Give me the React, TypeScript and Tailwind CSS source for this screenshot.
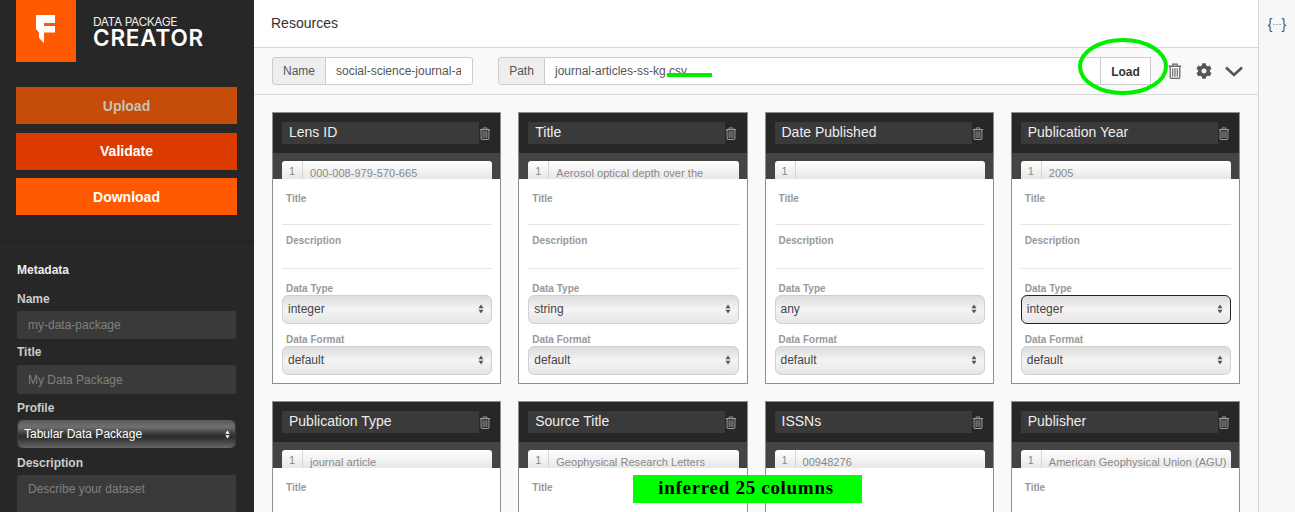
import React from 'react';
import { FaCog } from 'react-icons/fa';

const columns = [
  { name: 'Lens ID', sample: '000-008-979-570-665', type: 'integer' },
  { name: 'Title', sample: 'Aerosol optical depth over the', type: 'string' },
  { name: 'Date Published', sample: '', type: 'any' },
  { name: 'Publication Year', sample: '2005', type: 'integer', focused: true },
  { name: 'Publication Type', sample: 'journal article', type: 'string' },
  { name: 'Source Title', sample: 'Geophysical Research Letters', type: 'string' },
  { name: 'ISSNs', sample: '00948276', type: 'string' },
  { name: 'Publisher', sample: 'American Geophysical Union (AGU)', type: 'string' },
];

function Trash({ className }: { className?: string }) {
  return (
    <svg viewBox="0 0 12 14" className={className} fill="none" stroke="currentColor">
      <path d="M0.5 2.8H11.5" strokeWidth="1.3" />
      <path d="M4 2.5V1H8V2.5" strokeWidth="1" />
      <path d="M1.8 3V12.2C1.8 12.9 2.2 13.4 2.8 13.4H9.2C9.8 13.4 10.2 12.9 10.2 12.2V3" strokeWidth="1.1" />
      <path d="M4 4.5V12M6 4.5V12M8 4.5V12" strokeWidth="1" />
    </svg>
  );
}

function UpDown({ className }: { className?: string }) {
  return (
    <svg viewBox="0 0 7 12" className={className} fill="currentColor">
      <path d="M3.5 0.5L6.5 5H0.5Z" />
      <path d="M3.5 11.5L0.5 7H6.5Z" />
    </svg>
  );
}

function FieldSelect({ value, focused }: { value: string; focused?: boolean }) {
  return (
    <div
      className={`flex h-[29px] items-center justify-between rounded-[6px] bg-gradient-to-b from-[#dcdcdc] via-[#f4f4f4] to-[#e6e6e6] pb-[1px] pl-[5px] pr-[7px] text-[12px] font-normal text-[#444] ${
        focused ? 'border border-[#222]' : 'border border-[#d0d0d0]'
      }`}
    >
      <span>{value}</span>
      <UpDown className="h-[10px] w-[6px] text-[#555]" />
    </div>
  );
}

function ColumnCard({ name, sample, type, focused }: { name: string; sample: string; type: string; focused?: boolean }) {
  return (
    <div className="h-[272px] overflow-hidden border border-[#8f8f8f] bg-white">
      <div className="flex h-[40px] items-center bg-[#272727] pl-[9px] pr-[7px]">
        <div className="flex h-[22px] w-[197px] items-center bg-[#3a3a3a] pb-[1px] pl-[7px] text-[14px] text-[#eee]">{name}</div>
        <Trash className="h-[13px] w-[12px] text-[#999]" />
      </div>
      <div className="h-[26px] overflow-hidden bg-[#444] pl-[9px] pr-[8px] pt-[8px]">
        <div className="flex h-[30px] rounded-[3px] bg-gradient-to-b from-white to-[#d8d8d8] text-[11px] tracking-[0.05px] text-[#888]">
          <span className="w-[21px] border-r border-[#d4d4d4] pl-[7px] pt-[2px]">1</span>
          <span className="whitespace-nowrap pl-[7px] pt-[4px]">{sample}</span>
        </div>
      </div>
      <div className="pl-[9px] pr-[8px] pt-[12px] text-[10px] font-bold text-[#999]">
        <div className="h-[34px] border-b border-[#e4e4e4] pl-[4px]">Title</div>
        <div className="mt-[8px] h-[36px] border-b border-[#e4e4e4] pl-[4px]">Description</div>
        <div className="mt-[12px] h-[14px] pl-[4px]">Data Type</div>
        <FieldSelect value={type} focused={focused} />
        <div className="mt-[8px] h-[14px] pl-[4px]">Data Format</div>
        <FieldSelect value="default" />
      </div>
    </div>
  );
}

function SideButton({ label, className }: { label: string; className: string }) {
  return <div className={`flex h-[37px] items-center justify-center text-[14px] font-bold ${className}`}>{label}</div>;
}

function SideInput({ text, className }: { text: string; className: string }) {
  return <div className={`rounded-[2px] bg-[#3a3a3a] pl-[11px] text-[12px] text-[#808080] ${className}`}>{text}</div>;
}

export default function App() {
  return (
    <div
      className="relative flex h-[512px] w-[1295px] overflow-hidden bg-white text-[#333]"
      style={{ fontFamily: '"Liberation Sans", Arial, sans-serif' }}
    >
      {/* sidebar */}
      <aside className="h-full w-[254px] shrink-0 bg-[#272727]">
        <div className="flex h-[62px] pl-[16px]">
          <div className="flex h-[62px] w-[60px] items-start bg-[#ff5a00] pl-[20px] pt-[15px]">
            <svg viewBox="0 0 19 28" className="h-[28px] w-[19px]" fill="#fff">
              <path d="M0 0H19V8H8V11H19V17.500H8V28L3 23V17.500L0 14Z" />
            </svg>
          </div>
          <div className="pl-[17px] pt-[15px] text-white" style={{ fontFamily: 'Inter, sans-serif' }}>
            <div className="text-[12px] leading-[14px] tracking-[-0.45px] text-[#eee]">DATA PACKAGE</div>
            <div className="-mt-[1px] text-[22.500px] font-semibold leading-[20px] tracking-[0.8px]">CREATOR</div>
          </div>
        </div>
        <div className="mt-[25px] flex w-[237px] flex-col pl-[16px]">
          <SideButton label="Upload" className="bg-[#c54c09] pt-[1px] text-[#c9c0b9]" />
          <SideButton label="Validate" className="mt-[9px] bg-[#db3a00] text-white" />
          <SideButton label="Download" className="mt-[8px] bg-[#ff5a00] pt-[1px] text-white" />
        </div>
        <div className="mt-[26px] border-t border-[#1f1f1f]" />
        <div className="pl-[17px] pr-[18px] pt-[21px]">
          <div className="text-[12px] font-bold leading-[14px] text-[#eee]">Metadata</div>
          <div className="mt-[15px] text-[12px] font-bold leading-[14px] text-[#ccc]">Name</div>
          <SideInput text="my-data-package" className="mt-[5px] flex h-[28px] items-center" />
          <div className="mt-[6px] text-[12px] font-bold leading-[14px] text-[#ccc]">Title</div>
          <SideInput text="My Data Package" className="mt-[6px] flex h-[29px] items-center" />
          <div className="mt-[7px] text-[12px] font-bold leading-[14px] text-[#ccc]">Profile</div>
          <div className="mt-[5px] rounded-[4px] bg-[#3a3a3a] px-[1px]">
            <div className="flex h-[28px] items-center justify-between rounded-[6px] bg-[linear-gradient(to_bottom,#5a5a5a_0%,#6f6f6f_25%,#3a3a3a_50%,#2b2b2b_60%,#666_100%)] pl-[6px] pr-[5px] text-[12px] text-white">
              <span>Tabular Data Package</span>
              <UpDown className="h-[11px] w-[5px] text-white" />
            </div>
          </div>
          <div className="mt-[8px] text-[12px] font-bold leading-[14px] text-[#ccc]">Description</div>
          <SideInput text="Describe your dataset" className="mt-[5px] h-[60px] pt-[5px]" />
        </div>
      </aside>

      {/* resources */}
      <main className="flex h-full w-[1004px] shrink-0 flex-col">
        <div className="flex h-[48px] shrink-0 items-center border-b border-[#d6d6d6] pl-[17px] text-[14px] text-[#333]">
          Resources
        </div>
        <div className="flex h-[47px] shrink-0 items-center border-b border-[#d6d6d6] bg-[#f9f9f9] pl-[18px] text-[12px]">
          <div className="flex h-[28px] w-[201px]">
            <div className="flex w-[54px] items-center justify-center rounded-l-[3px] border border-[#ccc] bg-[#eee] text-[#555]">Name</div>
            <div className="w-[147px] overflow-hidden rounded-r-[3px] border border-l-0 border-[#ccc] bg-white pl-[10px] pr-[11px] pt-[4px] whitespace-nowrap text-[#555]">
              <div className="overflow-hidden">social-science-journal-articles</div>
            </div>
          </div>
          <div className="ml-[25px] flex h-[28px] w-[653px]">
            <div className="flex w-[47px] items-center justify-center rounded-l-[3px] border border-[#ccc] bg-[#eee] text-[#555]">Path</div>
            <div className="flex-1 border border-l-0 border-[#ccc] bg-white pl-[10px] pt-[4px] text-[#555]">journal-articles-ss-kg.csv</div>
            <div className="flex w-[50px] items-center justify-center border border-l-0 border-[#ccc] bg-white pt-[1px] text-[12px] font-bold text-[#333]">Load</div>
          </div>
          <Trash className="ml-[17px] h-[16px] w-[14px] text-[#666]" />
          <FaCog className="ml-[14px] h-[16px] w-[16px] text-[#555]" />
          <svg viewBox="0 0 18 11" className="ml-[13px] h-[11px] w-[18px]" fill="none" stroke="#555" strokeWidth="2.600">
            <path d="M1 1.500L9 9L17 1.500" />
          </svg>
        </div>
        <div className="flex-1 bg-[#f9f9f9] pl-[18px] pr-[18px] pt-[17px]">
          <div className="grid grid-cols-4 gap-[17px]">
            {columns.map((c) => (
              <ColumnCard key={c.name} {...c} />
            ))}
          </div>
        </div>
      </main>

      {/* right strip */}
      <div className="flex-1 border-l border-[#d6d6d6] bg-[#f7f7f7] pt-[15px] text-center text-[14px] leading-[18px] text-[#555]">
        {'{'}
        <span className="align-[2px] text-[9px]">···</span>
        {'}'}
      </div>

      {/* annotations on the screenshot */}
      <svg viewBox="0 0 90 57" className="pointer-events-none absolute left-[1078px] top-[38px] h-[57px] w-[90px]" fill="none" stroke="#00ee00" strokeWidth="4">
        <ellipse cx="45" cy="28.500" rx="43" ry="26.500" />
      </svg>
      <div className="absolute left-[667px] top-[73px] h-[4px] w-[45px] bg-[#00ee00]" />
      <div
        className="absolute left-[633px] top-[475px] flex h-[28px] w-[229px] items-center justify-center bg-[#00ff00] pb-[1px] pr-[3px] text-[19px] font-bold tracking-[0.7px] text-black"
        style={{ fontFamily: '"Liberation Serif", serif' }}
      >
        inferred 25 columns
      </div>
    </div>
  );
}
